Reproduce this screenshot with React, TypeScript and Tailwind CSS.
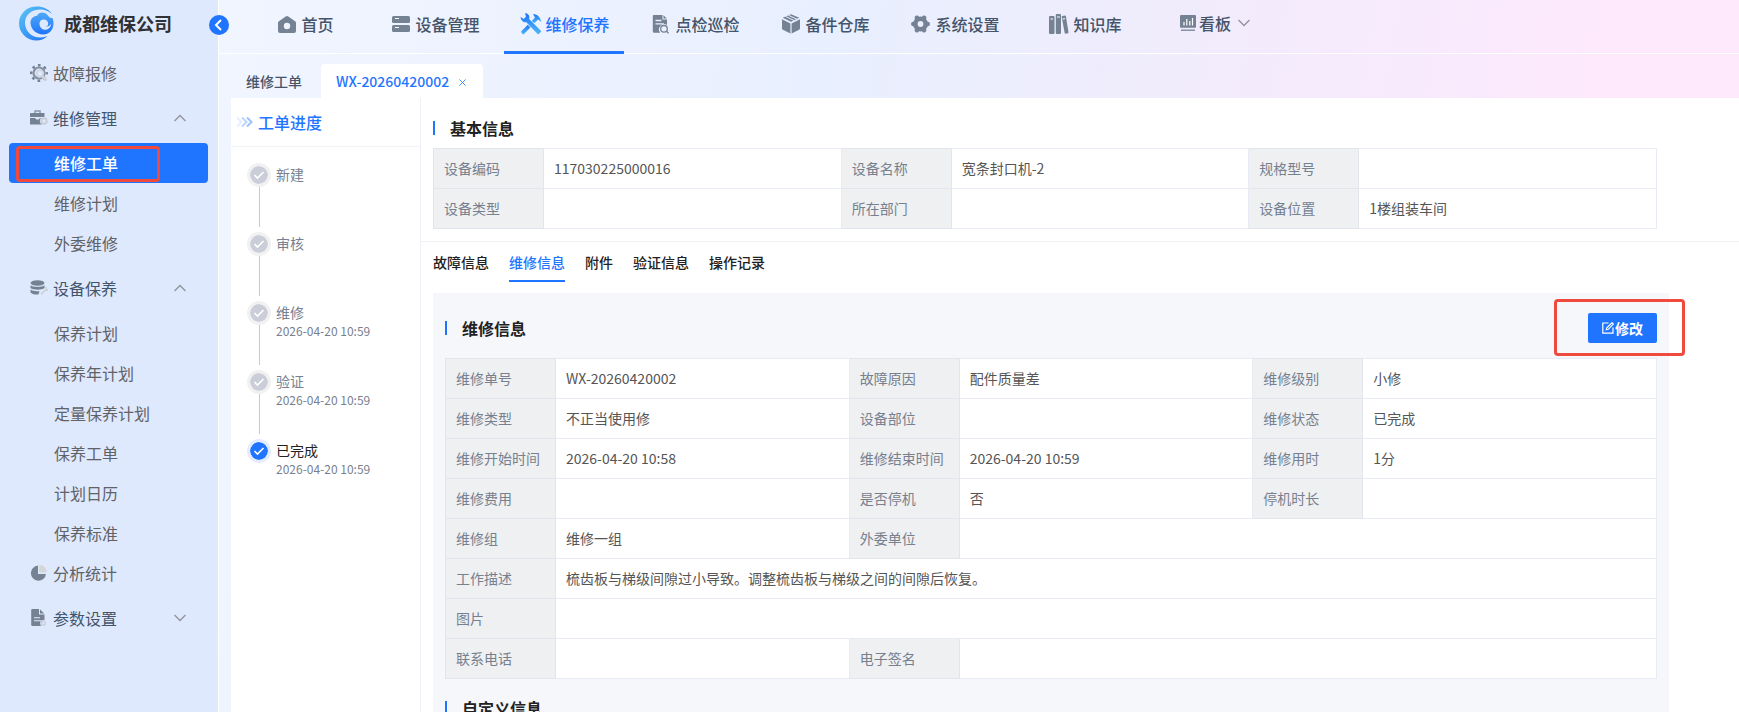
import React, { useState } from "react";
import clsx from "clsx";

type Field = { label: string; value?: string; span?: number };

const steps = [
  { name: "新建" },
  { name: "审核" },
  { name: "维修", time: "2026-04-20 10:59" },
  { name: "验证", time: "2026-04-20 10:59" },
  { name: "已完成", time: "2026-04-20 10:59", active: true },
];

const baseRows: Field[][] = [
  [
    { label: "设备编码", value: "117030225000016" },
    { label: "设备名称", value: "宽条封口机-2" },
    { label: "规格型号" },
  ],
  [
    { label: "设备类型" },
    { label: "所在部门" },
    { label: "设备位置", value: "1楼组装车间" },
  ],
];

const repairRows: Field[][] = [
  [
    { label: "维修单号", value: "WX-20260420002" },
    { label: "故障原因", value: "配件质量差" },
    { label: "维修级别", value: "小修" },
  ],
  [
    { label: "维修类型", value: "不正当使用修" },
    { label: "设备部位" },
    { label: "维修状态", value: "已完成" },
  ],
  [
    { label: "维修开始时间", value: "2026-04-20 10:58" },
    { label: "维修结束时间", value: "2026-04-20 10:59" },
    { label: "维修用时", value: "1分" },
  ],
  [
    { label: "维修费用" },
    { label: "是否停机", value: "否" },
    { label: "停机时长" },
  ],
  [
    { label: "维修组", value: "维修一组" },
    { label: "外委单位", span: 3 },
  ],
  [
    {
      label: "工作描述",
      value: "梳齿板与梯级间隙过小导致。调整梳齿板与梯级之间的间隙后恢复。",
      span: 5,
    },
  ],
  [{ label: "图片", span: 5 }],
  [{ label: "联系电话" }, { label: "电子签名", span: 3 }],
];

const Logo = () => (
  <svg className="w-9 h-9" viewBox="0 0 36 36">
    <defs>
      <linearGradient id="logo" x1="0" y1="0" x2="1" y2="1">
        <stop offset="0" stopColor="#5cc8f5" />
        <stop offset="1" stopColor="#1b6cf5" />
      </linearGradient>
      <linearGradient id="logoInner" x1="0" y1="0" x2="0" y2="1">
        <stop offset="0" stopColor="#4fa9f7" />
        <stop offset="1" stopColor="#1f74fb" />
      </linearGradient>
    </defs>
    <path
      d="M34 9C30 5.500 25.500 4 21 4.500 12.500 5 7 10.500 7 18c0 8.500 7 14.500 15 14.500 2.500 0 5-.5 7.500-1.500C26.500 34 22.500 35.500 18.500 35.500 9 35.500 1 28 1 18.500S8.500 1.500 18.500 1.500C25 1.500 31 4 34 9z"
      fill="url(#logo)"
    />
    <path
      d="M34.500 13c-2.500.5-3.700-1.200-5.200-3.200-3-3.300-8.300-3-10.300.9-4 .3-6.700 3.300-6.500 7.300.3 6.500 6 11.500 12.500 11.500 6 0 10.500-4.500 10.500-11 0-2-.3-4-1-5.500zM21.500 18.500c0-2.800 2.300-4.500 5-4 2.700.5 4.200 3 3.500 5.200-.5 1.300-1.700 1.800-3 1.500 2.700 1 5.200-.2 6.200-2.700-.3 4-3.200 6.500-6.400 6.300-3.100-.2-5.300-3-5.300-6.300z"
      fill="url(#logoInner)"
      fillRule="evenodd"
    />
  </svg>
);

// top navigation icons, 24px box
const HomeIcon = () => (
  <svg className="w-6 h-6" viewBox="0 0 24 24" fill="#748294">
    <path
      fillRule="evenodd"
      d="M11.700 4.600a2 2 0 0 1 2.600 0l6.800 4.600c.6.400.9 1 .9 1.600V19a2 2 0 0 1-2 2H6a2 2 0 0 1-2-2v-8.200c0-.6.3-1.200.9-1.600zM13 10.800a3.200 3.200 0 1 0 0 6.400 3.200 3.200 0 0 0 0-6.400z"
    />
  </svg>
);

const ServerIcon = () => (
  <svg className="w-6 h-6" viewBox="0 0 24 24">
    <rect x="4" y="4" width="18" height="7" rx="1.500" fill="#748294" />
    <rect x="4" y="13" width="18" height="7" rx="1.500" fill="#748294" />
    <path d="M7 6.500h4M7 15.500h4" stroke="#fff" strokeWidth="1.200" />
  </svg>
);

const ToolsIcon = () => (
  <svg className="w-6 h-6" viewBox="0 0 24 24" fill="none">
    <defs>
      <linearGradient id="tools" x1="0" y1="0" x2="0" y2="1">
        <stop offset="0" stopColor="#1f74fb" />
        <stop offset="1" stopColor="#4cb9f8" />
      </linearGradient>
    </defs>
    <path
      fill="url(#tools)"
      d="M7 1.200c2.300-.2 4.500 1.600 4.400 4.300l-.3 1.600 11.700 11.600c.4.400.4.900 0 1.300l-1.900 1.900c-.4.400-.9.400-1.300 0L8.300 10.200C5.500 10.700 2.700 8.500 2.600 5l3.200 1.900L8 4.600z"
    />
    <path
      fill="url(#tools)"
      d="M15 2.200c4-.2 7.200 2.300 8.200 7.800l-3-2.600-4 3.900-2.400-2.400 3.200-3.300z"
    />
    <path
      fill="url(#tools)"
      d="m9.800 12.800 2.600 2.600-6.400 6.500c-.5.500-1 .5-1.400 0l-1.200-1.300c-.4-.4-.4-.9 0-1.300z"
    />
  </svg>
);

const InspectIcon = () => (
  <svg className="w-6 h-6" viewBox="0 0 24 24">
    <path
      fill="#748294"
      d="M6 3h8.500v4.500H19V13a5.200 5.200 0 0 0-6.800 7.700H6a1.200 1.200 0 0 1-1.200-1.200V4.200C4.800 3.500 5.300 3 6 3zm9.500.2 3.300 3.300h-3.300z"
    />
    <path d="M7.500 8.500h6M7.500 11.800h8.500" stroke="#e9effe" strokeWidth="1.300" />
    <circle cx="16" cy="16.800" r="3.300" fill="none" stroke="#748294" strokeWidth="1.300" />
    <path d="m18.300 19 2.200 2.200" stroke="#748294" strokeWidth="1.400" />
  </svg>
);

const BoxIcon = () => (
  <svg className="w-6 h-6" viewBox="0 0 24 24">
    <path
      fill="#748294"
      d="M12.300 2.400a1.600 1.600 0 0 1 1.400 0l7.500 3.400-8.200 4-8.200-4zM4 7.300l8.400 4.100v10l-7.500-3.700A1.600 1.600 0 0 1 4 16.200zM22 7.300v8.900c0 .6-.3 1.200-.9 1.500l-7.500 3.700v-10z"
    />
    <path d="m7.500 4.400 9 4.300M10.300 3.200l9 4.200" stroke="#e9effe" strokeWidth="1" fill="none" />
  </svg>
);

const GearIcon = () => (
  <svg className="w-6 h-6" viewBox="0 0 24 24" fill="none" stroke="#748294">
    <circle cx="12.500" cy="12" r="5.200" strokeWidth="4.600" />
    <path
      strokeWidth="4.600"
      strokeLinecap="round"
      d="M5.300 12h.7M19 12h.7M8.900 5.800l.4.700M15.700 17.500l.4.700M16.100 5.800l-.4.700M9.300 17.500l-.4.700"
    />
  </svg>
);

const BooksIcon = () => (
  <svg className="w-6 h-6" viewBox="0 0 24 24" fill="#748294">
    <rect x="3" y="4" width="5.500" height="18" rx="1" />
    <rect x="9.800" y="2" width="5.200" height="20" rx="1" />
    <path d="M15.700 5c0-.6.300-1 .8-1.100l2.300-.4c.6-.1 1 .2 1.100.8l2.600 15.900c.1.600-.2 1-.7 1.100l-2 .4c-.6.100-1-.2-1.100-.7z" />
    <path d="M4.500 7h2.500M11 5h2.800M16.800 7l2-.4" stroke="#fff" strokeWidth="1.200" />
  </svg>
);

const BoardIcon = () => (
  <svg className="w-4 h-4" viewBox="0 0 16 16">
    <rect width="16" height="12.800" rx="1" fill="#748294" />
    <path d="M4 10.500V7M6.800 10.500V4M9.800 10.500V6M12.500 10.500V3" stroke="#fff" strokeWidth="1.200" />
    <path d="M1 15.200h14" stroke="#748294" strokeWidth="1.300" />
  </svg>
);

const Chevron = ({ up }: { up?: boolean }) => (
  <svg className="w-3 h-2" viewBox="0 0 12 8" fill="none" stroke="#909399" strokeWidth="1.300">
    <path d={up ? "M.5 7 6 1.500 11.500 7" : "M.5 1 6 6.500 11.500 1"} />
  </svg>
);

// side menu icons, 18px box
const RepairIcon = () => (
  <svg className="w-[18px] h-[18px]" viewBox="0 0 18 18" fill="none">
    <circle cx="9" cy="9" r="5.500" stroke="#8591a1" strokeWidth="2.200" />
    <circle cx="9" cy="9" r="7.800" stroke="#748294" strokeWidth="2.400" strokeDasharray="2.700 3.426" strokeDashoffset="1.300" />
    <circle cx="10" cy="9.500" r="3.300" fill="#dfe9fe" stroke="#cdd4df" strokeWidth="1.800" />
    <path d="m12 12 4.500 4.500" stroke="#cdd2da" strokeWidth="2.600" />
  </svg>
);

const BagIcon = () => (
  <svg className="w-[18px] h-[18px]" viewBox="0 0 18 18" fill="none">
    <path d="M5 4V2h5v2" stroke="#8f9aaa" strokeWidth="1.500" />
    <path d="M1 4h13.500v4H0V5a1 1 0 0 1 1-1z" fill="#748294" />
    <path d="M0 9h5l1.500 1.500h2L10 9h4.500v6.500H0z" fill="#748294" />
    <circle cx="14" cy="12" r="4.200" fill="#dfe9fe" />
    <circle cx="14" cy="12" r="2.700" stroke="#c9cfd8" strokeWidth="2" />
  </svg>
);

const DatabaseIcon = () => (
  <svg className="w-[18px] h-[18px]" viewBox="0 0 18 18">
    <ellipse cx="7.500" cy="4" rx="7" ry="2.800" fill="#748294" />
    <path
      fill="#748294"
      d="M.5 6.200c2.500 2.200 11.500 2.200 14 0V9c-2.500 2.300-11.500 2.300-14 0zm0 4.400c2 1.700 6 2 9 1.500l-1 3.300c-3.500.4-7-.5-8-2z"
    />
    <path d="m11 15 5-4.500M16 8v3h2" stroke="#cdd2da" strokeWidth="1.800" fill="none" />
  </svg>
);

const PieIcon = () => (
  <svg className="w-[18px] h-[18px]" viewBox="0 0 18 18">
    <path d="M8 1.500a7.600 7.600 0 1 0 8 8.500H8z" fill="#748294" />
    <path d="M9.200.8c4.200 0 7.400 3.200 7.400 7.800H9.200z" fill="#d5d6d8" />
  </svg>
);

const FileIcon = () => (
  <svg className="w-[18px] h-[18px]" viewBox="0 0 18 18">
    <path d="M2.500 0H9v5.500h5.500V17h-12A1.300 1.300 0 0 1 1.200 15.700V1.300C1.200.5 1.800 0 2.500 0zM10 .3 14.200 4.500H10z" fill="#748294" />
    <path d="M4 8.700h6M4 11.800h7" stroke="#dfe9fe" strokeWidth="1.100" />
    <circle cx="13.500" cy="14.300" r="3.300" fill="#dfe9fe" />
    <circle cx="13.500" cy="14.300" r="1.900" fill="none" stroke="#c9cfd8" strokeWidth="1.400" />
  </svg>
);

const navItems = [
  { name: "首页", icon: <HomeIcon /> },
  { name: "设备管理", icon: <ServerIcon /> },
  { name: "维修保养", icon: <ToolsIcon />, active: true },
  { name: "点检巡检", icon: <InspectIcon /> },
  { name: "备件仓库", icon: <BoxIcon /> },
  { name: "系统设置", icon: <GearIcon /> },
  { name: "知识库", icon: <BooksIcon /> },
];

const menu = [
  { name: "故障报修", icon: <RepairIcon /> },
  {
    name: "维修管理",
    icon: <BagIcon />,
    children: ["维修工单", "维修计划", "外委维修"],
  },
  {
    name: "设备保养",
    icon: <DatabaseIcon />,
    children: ["保养计划", "保养年计划", "定量保养计划", "保养工单", "计划日历", "保养标准"],
  },
  { name: "分析统计", icon: <PieIcon /> },
  { name: "参数设置", icon: <FileIcon />, children: [] },
];

const SideMenu = () => (
  <aside className="relative w-[219px] shrink-0 bg-[#dfe9fe] border-r border-white">
    <div className="h-[53px] pl-[18px] pt-[5px] flex items-start gap-[10px]">
      <Logo />
      <h1 className="text-lg leading-9 font-bold text-[#303133]">成都维保公司</h1>
    </div>
    <button
      aria-label="收起菜单"
      className="absolute top-[15px] -right-[11px] z-10 w-5 h-5 rounded-full bg-[#1f75ff] flex items-center justify-center"
    >
      <svg className="w-3 h-3" viewBox="0 0 12 12" fill="none" stroke="#fff" strokeWidth="2">
        <path d="M8 1 3 6l5 5" />
      </svg>
    </button>
    <nav>
      {menu.map((item) => (
        <div key={item.name}>
          <button
            className={clsx(
              "w-full pl-[30px] pr-8 flex items-center text-base",
              item.children ? "h-[50px] text-[#44546a]" : "h-10 text-[#606266]"
            )}
          >
            {item.icon}
            <span className="ml-[5px] flex-1 text-left">{item.name}</span>
            {item.children && <Chevron up={item.children.length > 0} />}
          </button>
          {item.children?.map((child) => (
            <a
              key={child}
              href="#"
              className={clsx(
                "relative h-10 ml-[9px] mr-[10px] pl-[45px] flex items-center text-base rounded-sm",
                child === "维修工单" ? "bg-[#1f75ff] text-white font-medium" : "text-[#606266]"
              )}
            >
              {child}
              {child === "维修工单" && (
                <span className="absolute left-[7px] top-[3px] w-36 h-9 border-3 border-[#f04a3f] rounded-sm" />
              )}
            </a>
          ))}
        </div>
      ))}
    </nav>
  </aside>
);

const TopNav = () => (
  <header className="h-[54px] shrink-0 border-b border-white">
    <nav className="pl-[25px] flex gap-[10px] text-base font-medium text-[#44546a]">
      {navItems.map((item) => (
        <a
          key={item.name}
          href="#"
          className={clsx(
            "w-[120px] h-[54px] pb-1 flex items-center justify-center gap-[3px] border-b-3",
            item.active ? "border-[#1f75ff] text-[#1f75ff]" : "border-transparent"
          )}
        >
          {item.icon}
          {item.name}
        </a>
      ))}
      <button className="h-[46px] pl-[26px] flex items-center gap-[3px]">
        <BoardIcon />
        <span>看板</span>
        <span className="ml-1">
          <Chevron />
        </span>
      </button>
    </nav>
  </header>
);

const Progress = () => (
  <section className="w-[190px] shrink-0 border-r border-[#eef0f7]">
    <h2 className="h-[49px] pl-[6px] flex items-center gap-[5px] border-b border-[#f2f3f6] text-base font-medium text-[#1f75ff]">
      <svg className="w-4 h-3" viewBox="0 0 16 12" fill="none" stroke="#1f75ff" strokeWidth="2">
        <path d="m0 1.500 4.500 4.500L0 10.500" opacity=".12" />
        <path d="m5 1.500 4.500 4.500L5 10.500" opacity=".3" />
        <path d="m10 1.500 4.500 4.500L10 10.500" opacity=".45" />
      </svg>
      工单进度
    </h2>
    <ol className="pl-4 pt-4">
      {steps.map((step, index) => (
        <li key={step.name} className="h-[69px] flex gap-[5px]">
          <div className="flex flex-col items-center">
            <span
              className={clsx(
                "w-6 h-6 rounded-full border-3 flex items-center justify-center bg-clip-padding",
                step.active ? "bg-[#1f75ff] border-[#e4edff]" : "bg-[#cbced8] border-[#f1f1f2]"
              )}
            >
              <svg className="w-3 h-3" viewBox="0 0 12 12" fill="none" stroke="#fff" strokeWidth="1.600">
                <path d="m1.500 6 3 3 6-6" />
              </svg>
            </span>
            {index < steps.length - 1 && <span className="w-px h-10 bg-[#c8c9cc]" />}
          </div>
          <div>
            <p className={clsx("text-sm leading-[22px]", step.active ? "text-[#222]" : "text-[#76808f]")}>
              {step.name}
            </p>
            {step.time && <p className="text-xs leading-4 text-[#76808f]">{step.time}</p>}
          </div>
        </li>
      ))}
    </ol>
  </section>
);

const FieldTable = ({ rows }: { rows: Field[][] }) => (
  <table className="w-full table-fixed border-collapse text-sm bg-white">
    <colgroup>
      <col className="w-[110px]" />
      <col />
      <col className="w-[110px]" />
      <col />
      <col className="w-[110px]" />
      <col />
    </colgroup>
    <tbody>
      {rows.map((row) => (
        <tr key={row[0].label} className="h-10">
          {row.map((field) => (
            <React.Fragment key={field.label}>
              <th
                scope="row"
                className="px-[10px] pb-[2px] border border-[#e2e5ec] bg-[#eef0f2] text-left font-normal text-[#76808f]"
              >
                {field.label}
              </th>
              <td colSpan={field.span} className="px-[10px] pb-[2px] border border-[#e8ebf4] text-[#555]">
                {field.value}
              </td>
            </React.Fragment>
          ))}
        </tr>
      ))}
    </tbody>
  </table>
);

const SectionTitle = ({ children }: { children: React.ReactNode }) => (
  <h3 className="flex items-center gap-[15px] text-base leading-6 font-bold text-[#222]">
    <span className="w-[2px] h-[14px] bg-[#1f75ff]" />
    {children}
  </h3>
);

const Detail = () => {
  const [tab, setTab] = useState("维修信息");

  return (
    <section className="flex-1 min-w-0">
      <div className="pt-[18px] pb-3 pl-3 pr-[82px] border-b border-[#f0f1f4]">
        <SectionTitle>基本信息</SectionTitle>
        <div className="mt-2">
          <FieldTable rows={baseRows} />
        </div>
      </div>
      <div className="pl-3 pt-2 flex gap-5">
        {["故障信息", "维修信息", "附件", "验证信息", "操作记录"].map((name) => (
          <button
            key={name}
            onClick={() => setTab(name)}
            className={clsx(
              "h-8 pb-[6px] text-sm font-medium border-b-2",
              tab === name ? "text-[#1f75ff] border-[#1f75ff]" : "text-[#222] border-transparent"
            )}
          >
            {name}
          </button>
        ))}
      </div>
      <div className="mt-[11px] ml-3 mr-[70px] px-3 pt-5 bg-[#f5f7fb]">
        <div className="flex items-center justify-between mb-[15px]">
          <SectionTitle>维修信息</SectionTitle>
          <div className="relative">
            <button className="w-[69px] h-[30px] pb-px flex items-center justify-center gap-px rounded-xs bg-[#1f75ff] text-sm font-bold text-white">
              <svg className="w-3 h-3" viewBox="0 0 12 12" fill="none" stroke="#fff" strokeWidth="1.200">
                <path d="M6.500 1H.8v10.200H11V5.500M4.300 7.700l.5-2L10 .7l1.400 1.400-5.200 5.200z" />
              </svg>
              修改
            </button>
            <span className="absolute -left-[34px] -top-[14px] w-[131px] h-[57px] border-3 border-[#f04a3f] rounded-sm pointer-events-none" />
          </div>
        </div>
        <FieldTable rows={repairRows} />
        <div className="mt-[17px] pb-5">
          <SectionTitle>自定义信息</SectionTitle>
        </div>
      </div>
    </section>
  );
};

export default function App() {
  return (
    <div className="h-screen overflow-hidden flex font-['Noto_Sans_CJK_SC',sans-serif] bg-[linear-gradient(100deg,#f1f5ff_12%,#e8effe_45%,#f0ecfc_63%,#fee8fc_88%)]">
      <SideMenu />
      <div className="flex-1 min-w-0 flex flex-col">
        <TopNav />
        <div className="h-11 shrink-0 pl-3 pt-[10px] flex text-sm font-medium">
          <button className="px-[15px] text-[#44546a]">维修工单</button>
          <div className="ml-1 px-[15px] flex items-center gap-2 bg-white rounded-t-sm text-[#1f75ff]">
            <span>WX-20260420002</span>
            <button aria-label="关闭" className="w-[11px] h-3 pt-[3px] flex items-center justify-center">
              <svg className="w-[7px] h-[7px]" viewBox="0 0 8 8" stroke="#1f75ff" strokeWidth="0.900">
                <path d="m.5.5 7 7M7.500.5l-7 7" />
              </svg>
            </button>
          </div>
        </div>
        <main className="flex-1 min-h-0 overflow-hidden ml-3 flex bg-white">
          <Progress />
          <Detail />
        </main>
      </div>
    </div>
  );
}
